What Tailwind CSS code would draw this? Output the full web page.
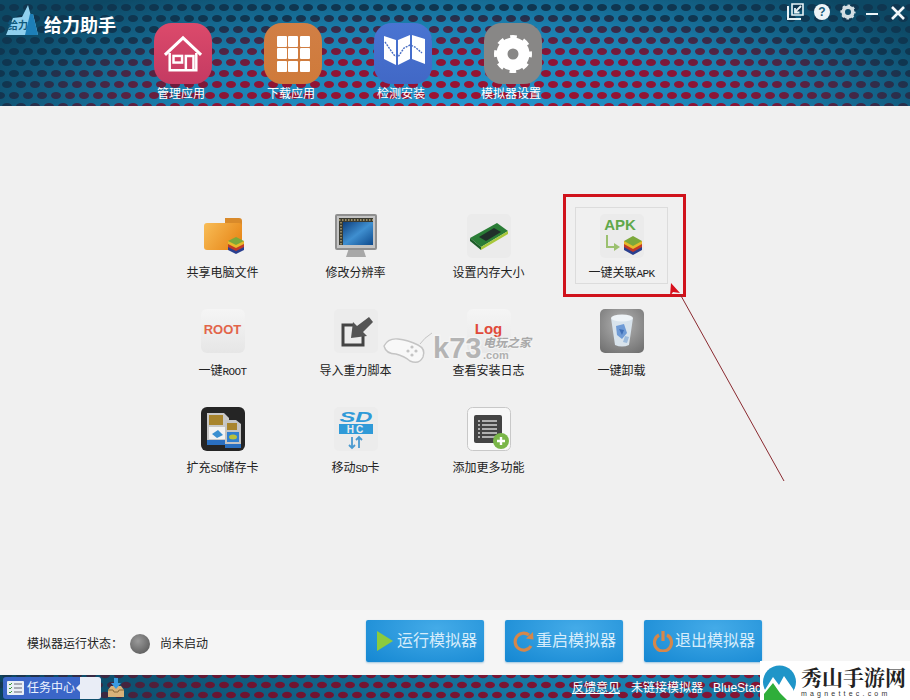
<!DOCTYPE html>
<html lang="zh-CN">

<head>
    <meta charset="UTF-8">
    <title>给力助手</title>
    <script src="https://cdn.jsdelivr.net/npm/@tailwindcss/browser@4"></script>
</head>

<body class="bg-[#f0f0f0]">
    <div class="relative w-[910px] h-[700px] overflow-hidden flex flex-col font-['Liberation_Sans','Noto_Sans_CJK_SC',sans-serif] text-[12px] text-[#222]">

        <!-- Header -->
        <header class="relative h-[106px] flex shrink-0 bg-[#0f5a7c]">
            <svg class="absolute inset-0" width="910" height="106">
                <defs>
                    <pattern id="holes" width="14" height="22" patternUnits="userSpaceOnUse">
                        <ellipse cx="7" cy="18.5" rx="5" ry="3.4" fill="#fff" />
                        <ellipse cx="0" cy="7.5" rx="5" ry="3.4" fill="#fff" />
                        <ellipse cx="14" cy="7.5" rx="5" ry="3.4" fill="#fff" />
                    </pattern>
                    <mask id="holesMask"><rect width="910" height="106" fill="url(#holes)" /></mask>
                    <radialGradient id="plate" gradientUnits="userSpaceOnUse" cx="470" cy="106" r="520" gradientTransform="translate(0 76) scale(1 0.28)">
                        <stop offset="0" stop-color="#2596cf" />
                        <stop offset="0.55" stop-color="#1b80b0" />
                        <stop offset="1" stop-color="#0d4864" />
                    </radialGradient>
                    <radialGradient id="dots" gradientUnits="userSpaceOnUse" cx="470" cy="106" r="480" gradientTransform="translate(0 84) scale(1 0.2)">
                        <stop offset="0" stop-color="#a01230" />
                        <stop offset="0.55" stop-color="#8a1536" />
                        <stop offset="0.78" stop-color="#4a2645" />
                        <stop offset="1" stop-color="#0f3650" />
                    </radialGradient>
                </defs>
                <rect width="910" height="106" fill="url(#plate)" />
                <rect width="910" height="106" fill="url(#dots)" mask="url(#holesMask)" />
            </svg>

            <!-- Logo -->
            <div class="relative w-[128px] shrink-0 flex items-start pt-[4px] pl-[5px]">
                <div class="relative w-[34px] h-[32px]">
                    <svg width="34" height="32" viewBox="0 0 34 32" class="absolute inset-0">
                        <path d="M1 31 L8 14 L17 13 L23 1 L26 12 L28 10 L33 31 Z" fill="#8fd0ee" />
                        <path d="M20 31 L25 10 L28 10 L33 31 Z" fill="#1d7fb8" />
                    </svg>
                    <span class="absolute left-[3px] top-[15px] text-[10px] leading-[14px] font-bold text-[#0f5a7c]">给力</span>
                </div>
                <span class="relative ml-[5px] mt-[11px] text-[18px] leading-[22px] font-bold text-white">给力助手</span>
            </div>

            <!-- Nav -->
            <nav class="relative flex pt-[23px]">
                <div class="w-[110px] flex flex-col items-center">
                    <div class="w-[58px] h-[61px] rounded-[18px] bg-gradient-to-b from-[#dc4a6b] to-[#c43a62] flex items-center justify-center">
                        <svg width="40" height="38" viewBox="0 0 42 40" fill="none" stroke="#fff" stroke-width="2.6">
                            <path d="M2 21 L21 3 L40 21" stroke-width="3.2" />
                            <path d="M7 19 V37 H35 V19" />
                            <rect x="11" y="22" width="9" height="7" />
                            <path d="M24 37 V22 H32 V37" />
                        </svg>
                    </div>
                    <span class="mt-[2px] -ml-[4px] leading-[16px] text-white">管理应用</span>
                </div>
                <div class="w-[110px] flex flex-col items-center">
                    <div class="w-[58px] h-[61px] rounded-[18px] bg-gradient-to-b from-[#d17f45] to-[#cf7a3a] grid grid-cols-[10px_10px_10px] grid-rows-[11px_11px_11px] gap-[1.5px] content-center justify-center">
                        <i class="bg-white rounded-[1px]"></i><i class="bg-white rounded-[1px]"></i><i class="bg-white rounded-[1px]"></i>
                        <i class="bg-white rounded-[1px]"></i><i class="bg-white rounded-[1px]"></i><i class="bg-white rounded-[1px]"></i>
                        <i class="bg-white rounded-[1px]"></i><i class="bg-white rounded-[1px]"></i><i class="bg-white rounded-[1px]"></i>
                    </div>
                    <span class="mt-[2px] -ml-[4px] leading-[16px] text-white">下载应用</span>
                </div>
                <div class="w-[110px] flex flex-col items-center">
                    <div class="w-[58px] h-[61px] rounded-[18px] bg-gradient-to-b from-[#4a74d2] to-[#4168c6]">
                        <svg width="58" height="61" viewBox="2 1 58 61">
                            <path d="M12 14 L24 18 V43 L12 37 Z M26 18 L38 13 V37 L26 43 Z M40 13 L53 17 V42 L40 37 Z" fill="#fff" />
                            <path d="M13 20 L22 33 L26 35 L32 26 L38 23 L43 25 L50 31" fill="none" stroke="#4a6fc4" stroke-width="1.4" stroke-dasharray="2 1" />
                        </svg>
                    </div>
                    <span class="mt-[2px] -ml-[4px] leading-[16px] text-white">检测安装</span>
                </div>
                <div class="w-[110px] flex flex-col items-center">
                    <div class="w-[58px] h-[61px] rounded-[18px] bg-[#888786] flex items-center justify-center">
                        <svg width="40" height="40" viewBox="0 0 40 40" fill="none" stroke="#fff">
                            <circle cx="20" cy="20" r="11" stroke-width="11" />
                            <circle cx="20" cy="20" r="15.5" stroke-width="7" stroke-dasharray="6 6.17" stroke-dashoffset="3" />
                        </svg>
                    </div>
                    <span class="mt-[2px] -ml-[4px] leading-[16px] text-white whitespace-nowrap">模拟器设置</span>
                </div>
            </nav>

            <!-- Window controls -->
            <div class="relative ml-auto flex items-start pt-[3px] pr-[5px] gap-[10px]">
                <svg width="17" height="17" viewBox="0 0 17 17" fill="none" stroke="#e8f2f6" stroke-width="2">
                    <path d="M1 3 V16 H14" />
                    <path d="M5 1 H16 V12 H5 Z" stroke-width="1.6" />
                    <path d="M14 3 L8 9 M8 5 V9.5 H12.5" stroke-width="1.8" />
                </svg>
                <span class="w-[16px] h-[16px] mt-[1px] rounded-full bg-[#eef4f7] text-[#1a5a78] text-[12px] leading-[16px] font-bold text-center">?</span>
                <svg class="mt-[1px]" width="16" height="16" viewBox="0 0 40 40" fill="none" stroke="#d4dee2">
                    <circle cx="20" cy="20" r="12" stroke-width="9" />
                    <circle cx="20" cy="20" r="15.5" stroke-width="7" stroke-dasharray="6 6.17" stroke-dashoffset="3" />
                </svg>
                <span class="w-[12px] h-[2px] mt-[10px] bg-[#eef4f7]"></span>
                <svg class="ml-[3px] mt-[3px]" width="14" height="14" viewBox="0 0 14 14" stroke="#f2f7f9" stroke-width="2.6">
                    <path d="M1 1 L13 13 M13 1 L1 13" />
                </svg>
            </div>
        </header>

        <!-- Tools -->
        <main class="h-[504px] shrink-0 bg-[#f0f0f0] pt-[103px] pl-[156px]">
            <div class="grid grid-cols-[133px_133px_133px_133px] auto-rows-[97px]">
                <div class="flex flex-col items-center pt-[5px]">
                    <svg width="44" height="44" viewBox="0 0 44 44">
                        <defs>
                            <linearGradient id="folder" x1="0" y1="0" x2="1" y2="0.5">
                                <stop offset="0" stop-color="#f8bd57" />
                                <stop offset="1" stop-color="#e88a1c" />
                            </linearGradient>
                        </defs>
                        <path d="M24 4 H38 Q41 4 41 7 V12 H24 Z" fill="#d98a2a" />
                        <path d="M3 12 Q3 9 6 9 H38 Q41 9 41 12 V33 Q41 36 38 36 H6 Q3 36 3 33 Z" fill="url(#folder)" />
                        <path d="M27 36 L35 40 L43 36 V33 H27 Z" fill="#2a3f8f" />
                        <path d="M27 33 L35 37 L43 33 V30 H27 Z" fill="#c03a28" />
                        <path d="M27 30 L35 34 L43 30 V27 H27 Z" fill="#e8b92a" />
                        <path d="M27 27 L35 23 L43 27 L35 31 Z" fill="#7ca83a" />
                    </svg>
                    <span class="mt-[7px] leading-[16px]">共享电脑文件</span>
                </div>
                <div class="flex flex-col items-center pt-[5px]">
                    <svg width="44" height="44" viewBox="0 0 44 44">
                        <defs>
                            <linearGradient id="screen" x1="0" y1="0" x2="1" y2="1">
                                <stop offset="0" stop-color="#0f3f7c" />
                                <stop offset="0.5" stop-color="#3f8fd0" />
                                <stop offset="1" stop-color="#0e4a8c" />
                            </linearGradient>
                        </defs>
                        <path d="M15 34 H29 L32 43 H12 Z" fill="#a8a8a8" />
                        <rect x="1" y="0" width="42" height="36" rx="2" fill="#8f8f8f" />
                        <rect x="3" y="2" width="38" height="32" fill="#c4c4c4" />
                        <rect x="5" y="4" width="34" height="27" fill="#3a3a30" />
                        <rect x="9" y="8" width="30" height="23" fill="url(#screen)" />
                        <path d="M5 6 H39 M7 8 V31" stroke="#b9a878" stroke-width="1.4" stroke-dasharray="1.5 1.5" />
                    </svg>
                    <span class="mt-[7px] leading-[16px]">修改分辨率</span>
                </div>
                <div class="flex flex-col items-center pt-[5px]">
                    <svg width="44" height="44" viewBox="0 0 44 44">
                        <rect width="44" height="44" rx="5" fill="#ebebeb" />
                        <path d="M3 24 L30 9 L41 17 L14 33 Z" fill="#2a7d36" />
                        <path d="M3 24 L14 33 V36 L3 27 Z" fill="#1d5c28" />
                        <path d="M14 33 L41 17 V20 L14 36 Z" fill="#a8c83a" />
                        <path d="M12 23 L27 14 L34 18 L19 27 Z" fill="#20302a" />
                    </svg>
                    <span class="mt-[7px] leading-[16px]">设置内存大小</span>
                </div>
                <div class="relative flex flex-col items-center pt-[5px]">
                    <div class="absolute left-[20px] -top-[2px] w-[93px] h-[77px] border border-[#dcdcdc]"></div>
                    <svg class="relative" width="44" height="44" viewBox="0 0 44 44">
                        <rect width="44" height="44" rx="5" fill="#ebebeb" />
                        <text x="20" y="16" text-anchor="middle" font-family="Liberation Sans" font-weight="700" font-size="15" fill="#5fa84a">APK</text>
                        <path d="M7 21 V33 H15" fill="none" stroke="#9bc06f" stroke-width="2" />
                        <path d="M14 29 L20 33 L14 37 Z" fill="#9bc06f" />
                        <path d="M24 36 L33 41 L42 36 V33 H24 Z" fill="#2a3f8f" />
                        <path d="M24 33 L33 38 L42 33 V30 H24 Z" fill="#c03a28" />
                        <path d="M24 30 L33 35 L42 30 V27 H24 Z" fill="#e8b92a" />
                        <path d="M24 27 L33 22 L42 27 L33 32 Z" fill="#7ca83a" />
                    </svg>
                    <span class="relative mt-[7px] leading-[16px]">一键关联<span class="font-['Liberation_Mono'] text-[11px] tracking-[-0.6px]">APK</span></span>
                </div>

                <div class="flex flex-col items-center pt-[3px]">
                    <div class="w-[44px] h-[44px] rounded-[6px] bg-gradient-to-b from-[#f5f5f5] to-[#e6e6e6] flex justify-center pt-[13px] text-[#e2654a] text-[13px] leading-[16px] font-bold">ROOT</div>
                    <span class="mt-[10px] leading-[16px]">一键<span class="font-['Liberation_Mono'] text-[11px] tracking-[-0.6px]">ROOT</span></span>
                </div>
                <div class="flex flex-col items-center pt-[3px]">
                    <svg width="44" height="44" viewBox="0 0 44 44">
                        <rect width="44" height="44" rx="5" fill="#ececec" />
                        <path d="M20 16 H9 V36 H29 V27" fill="none" stroke="#444" stroke-width="3" />
                        <path d="M35 8 L39 13 L29 23 L33 27 L17 29 L19 13 L23 17 Z" fill="#555" />
                    </svg>
                    <span class="mt-[10px] leading-[16px]">导入重力脚本</span>
                </div>
                <div class="flex flex-col items-center pt-[3px]">
                    <div class="w-[44px] h-[44px] rounded-[6px] bg-gradient-to-b from-[#f5f5f5] to-[#e8e8e8] flex justify-center pt-[12px] text-[#e04a3a] text-[15px] leading-[16px] font-bold">Log</div>
                    <span class="mt-[10px] leading-[16px]">查看安装日志</span>
                </div>
                <div class="flex flex-col items-center pt-[3px]">
                    <svg width="44" height="44" viewBox="0 0 44 44">
                        <defs>
                            <radialGradient id="binBg" cx="0.5" cy="0.35" r="0.75">
                                <stop offset="0" stop-color="#b4b4b4" />
                                <stop offset="1" stop-color="#727272" />
                            </radialGradient>
                        </defs>
                        <rect width="44" height="44" rx="5" fill="url(#binBg)" />
                        <path d="M11 9 L15 36 Q22 39 29 36 L33 9 Q22 13 11 9 Z" fill="#d8e3ec" />
                        <ellipse cx="22" cy="9" rx="11" ry="3.5" fill="#eef3f7" />
                        <path d="M16 17 L24 15 L27 24 L22 30 L17 26 Z" fill="#6f9bd6" />
                        <path d="M19 20 L24 21 L22 26 Z" fill="#3f6fb8" />
                        <path d="M25 27 L29 28 L27 34 L23 33 Z" fill="#9dbbdc" />
                    </svg>
                    <span class="mt-[10px] leading-[16px]">一键卸载</span>
                </div>

                <div class="flex flex-col items-center pt-[4px]">
                    <svg width="44" height="44" viewBox="0 0 44 44">
                        <rect width="44" height="44" rx="6" fill="#252525" />
                        <path d="M6 6 H23 L28 11 V38 H6 Z" fill="#c8c8c8" />
                        <rect x="8" y="8" width="14" height="10" fill="#a8842c" />
                        <rect x="8" y="20" width="18" height="12" fill="#f2f2f2" />
                        <path d="M11 27 L17 23 L22 28 L16 31 Z" fill="#3a8fd0" />
                        <rect x="6" y="33" width="22" height="5" fill="#2a6fc0" />
                        <path d="M24 13 H35 L40 17 V41 H24 Z" fill="#c4c4c4" />
                        <rect x="26" y="16" width="10" height="7" fill="#a8842c" />
                        <rect x="26" y="25" width="12" height="10" fill="#2f7fd0" />
                        <ellipse cx="32" cy="30" rx="4" ry="2.5" fill="#b8c03a" />
                        <rect x="24" y="37" width="16" height="4" fill="#2a6fc0" />
                    </svg>
                    <span class="mt-[9px] leading-[16px]">扩充<span class="font-['Liberation_Mono'] text-[11px] tracking-[-0.6px]">SD</span>储存卡</span>
                </div>
                <div class="flex flex-col items-center pt-[4px]">
                    <svg width="44" height="44" viewBox="0 0 44 44">
                        <rect width="44" height="44" rx="5" fill="#ececec" />
                        <text x="22" y="15" text-anchor="middle" font-family="Liberation Sans" font-weight="700" font-style="italic" font-size="15" textLength="33" lengthAdjust="spacingAndGlyphs" fill="#2f9ad8">SD</text>
                        <rect x="5" y="17" width="34" height="10" fill="#2f9ad8" />
                        <text x="22" y="25.5" text-anchor="middle" font-family="Liberation Sans" font-weight="700" font-size="10" letter-spacing="2" fill="#ececec">HC</text>
                        <path d="M18 30 V41 M15 38 L18 41 L21 38 M25 41 V30 M22 33 L25 30 L28 33" fill="none" stroke="#4a9ad0" stroke-width="1.8" />
                    </svg>
                    <span class="mt-[9px] leading-[16px]">移动<span class="font-['Liberation_Mono'] text-[11px] tracking-[-0.6px]">SD</span>卡</span>
                </div>
                <div class="flex flex-col items-center pt-[4px]">
                    <svg width="44" height="44" viewBox="0 0 44 44">
                        <rect x="0.5" y="0.5" width="43" height="43" rx="5" fill="#f8f8f8" stroke="#c8c8c8" />
                        <rect x="7" y="8" width="28" height="28" rx="2" fill="#444" />
                        <path d="M15 14 H30 M15 18 H30 M15 22 H30 M15 26 H30 M15 30 H30 M11 14 H13 M11 18 H13 M11 22 H13 M11 26 H13 M11 30 H13" stroke="#d4d4d4" stroke-width="1.6" />
                        <circle cx="34" cy="34" r="8" fill="#7ab648" />
                        <path d="M34 30 V38 M30 34 H38" stroke="#fff" stroke-width="2.4" />
                    </svg>
                    <span class="mt-[9px] leading-[16px]">添加更多功能</span>
                </div>
            </div>
        </main>

        <!-- Status bar -->
        <section class="h-[65px] shrink-0 bg-[#f5f5f5] flex items-center pl-[27px] pb-[3px]">
            <span class="mt-[6px] w-[96px] whitespace-nowrap">模拟器运行状态：</span>
            <span class="mt-[6px] ml-[7px] w-[20px] h-[20px] rounded-full bg-[radial-gradient(circle_at_40%_35%,#9a9a9a,#4f4f4f)]"></span>
            <span class="mt-[6px] ml-[10px] w-[206px]">尚未启动</span>

            <button class="w-[118px] h-[42px] rounded-[2px] shadow-[0_1px_2px_#9cc4de] bg-[radial-gradient(ellipse_at_60%_20%,#44abe8,#1487d2)] text-[#d6ecfb] text-[16px] flex items-center pl-[11px] gap-[4px]">
                <svg width="16" height="20" viewBox="0 0 16 20"><path d="M0 0 L16 10 L0 20 Z" fill="#8ccb3e" /></svg>
                运行模拟器
            </button>
            <button class="ml-[21px] w-[118px] h-[42px] rounded-[2px] shadow-[0_1px_2px_#9cc4de] bg-[radial-gradient(ellipse_at_60%_20%,#44abe8,#1487d2)] text-[#d6ecfb] text-[16px] flex items-center pl-[8px] gap-[2px]">
                <svg width="21" height="21" viewBox="0 0 21 21" fill="none" stroke="#d5874a" stroke-width="3.2">
                    <path d="M18 15 A8.5 8.5 0 1 1 16 4" />
                    <path d="M13 7.5 L20.5 8.5 L20 1 Z" fill="#d5874a" stroke="none" />
                </svg>
                重启模拟器
            </button>
            <button class="ml-[21px] w-[118px] h-[42px] rounded-[2px] shadow-[0_1px_2px_#9cc4de] bg-[radial-gradient(ellipse_at_60%_20%,#44abe8,#1487d2)] text-[#d6ecfb] text-[16px] flex items-center pl-[9px] gap-[2px]">
                <svg width="20" height="22" viewBox="0 0 20 22" fill="none" stroke="#d5874a" stroke-width="3.2">
                    <path d="M6 5 A8.5 8.5 0 1 0 14 5" />
                    <path d="M10 1 V11" />
                </svg>
                退出模拟器
            </button>
        </section>

        <!-- Footer -->
        <footer class="relative h-[25px] shrink-0 flex items-center bg-[#0f5272] text-white">
            <svg class="absolute inset-0" width="910" height="25">
                <defs>
                    <pattern id="holesFoot" width="14" height="20" patternUnits="userSpaceOnUse">
                        <ellipse cx="7" cy="0" rx="5" ry="3.2" fill="#fff" />
                        <ellipse cx="7" cy="20" rx="5" ry="3.2" fill="#fff" />
                        <ellipse cx="0" cy="10" rx="5" ry="3.2" fill="#fff" />
                        <ellipse cx="14" cy="10" rx="5" ry="3.2" fill="#fff" />
                    </pattern>
                    <mask id="footMask"><rect width="910" height="25" fill="url(#holesFoot)" /></mask>
                    <linearGradient id="footPlate" x1="0" x2="1" y1="0" y2="0">
                        <stop offset="0" stop-color="#0c4560" />
                        <stop offset="0.7" stop-color="#1a82b2" />
                        <stop offset="1" stop-color="#125d80" />
                    </linearGradient>
                    <linearGradient id="footDots" x1="0" x2="1" y1="0" y2="0">
                        <stop offset="0" stop-color="#133850" />
                        <stop offset="0.25" stop-color="#6e1430" />
                        <stop offset="1" stop-color="#8a1536" />
                    </linearGradient>
                </defs>
                <rect width="910" height="25" fill="url(#footPlate)" />
                <rect width="910" height="25" fill="url(#footDots)" mask="url(#footMask)" />
            </svg>

            <div class="relative ml-[3px] w-[98px] h-[22px] rounded-[3px] bg-[#3b66c8] flex items-center overflow-hidden">
                <svg class="ml-[4px]" width="17" height="14" viewBox="0 0 17 14">
                    <rect width="17" height="14" rx="1" fill="#e8eef6" />
                    <path d="M7 3 H15 M7 7 H15 M7 11 H15" stroke="#667" stroke-width="1" />
                    <path d="M2 3 L3 4 L5 2 M2 7 L3 8 L5 6 M2 11 L3 12 L5 10" stroke="#3a9a3a" fill="none" stroke-width="1" />
                </svg>
                <span class="ml-[3px] text-[12px] leading-[16px] text-[#eef3ff] whitespace-nowrap">任务中心</span>
                <div class="absolute right-0 top-0 h-full w-[21px] bg-[#e9edf6]"></div>
                <div class="absolute right-[21px] top-[7px] w-0 h-0 border-y-[4px] border-y-transparent border-r-[4px] border-r-[#e9edf6]"></div>
            </div>
            <svg class="relative ml-[7px]" width="16" height="19" viewBox="0 0 16 19">
                <path d="M0 12 L3 8 H13 L16 12 V19 H0 Z" fill="#d9b27a" />
                <path d="M0 12 H5 L6 14 H10 L11 12 H16" fill="none" stroke="#8a6a3a" stroke-width="1" />
                <path d="M6 0 H10 V5 H13 L8 11 L3 5 H6 Z" fill="#3a9ae0" />
            </svg>
            <a class="relative ml-[448px] underline whitespace-nowrap">反馈意见</a>
            <span class="relative ml-[11px] whitespace-nowrap">未链接模拟器</span>
            <span class="relative ml-[10px] whitespace-nowrap">BlueStacks</span>
        </footer>

        <!-- Red annotation frame -->
        <div class="absolute left-[563px] top-[194px] w-[123px] h-[103px] border-[3px] border-[#d0121b]"></div>
        <svg class="absolute left-[660px] top-[270px]" width="140" height="220" viewBox="0 0 140 220">
            <path d="M124 211 L20 24" stroke="#8a2a30" stroke-width="1" fill="none" />
            <path d="M11 13 L20 23 L13 22 L10 26 Z" fill="#d8101c" />
        </svg>

        <!-- k73 watermark -->
        <div class="absolute left-[382px] top-[330px] w-[155px] h-[38px]">
            <svg class="absolute left-0 top-0" width="52" height="36" viewBox="0 0 52 36">
                <path d="M2 16 Q6 8 16 9 Q26 10 36 15 Q44 19 41 27 Q37 35 28 31 Q22 26 14 24 Q4 24 2 16 Z" fill="#f8f8f8" stroke="#c4c4c4" stroke-width="1.4" />
                <path d="M38 14 Q42 8 50 3" fill="none" stroke="#c4c4c4" stroke-width="1" />
                <circle cx="30" cy="17" r="1.6" fill="#c4c4c4" /><circle cx="34" cy="21" r="1.6" fill="#c4c4c4" /><circle cx="26" cy="21" r="1.6" fill="#c4c4c4" /><circle cx="30" cy="25" r="1.6" fill="#c4c4c4" />
            </svg>
            <span class="absolute left-[51px] top-[3px] text-[29px] leading-[30px] font-bold text-[#b4b4b4] [-webkit-text-stroke:3px_#f4f4f4] [paint-order:stroke_fill]">k73</span>
            <span class="absolute left-[101px] top-[7px] text-[12px] leading-[12px] font-bold italic text-[#a8a8a8] whitespace-nowrap [-webkit-text-stroke:2px_#f4f4f4] [paint-order:stroke_fill]">电玩之家</span>
            <span class="absolute left-[101px] top-[20px] text-[11px] leading-[10px] font-bold text-[#b0b0b0] [-webkit-text-stroke:2px_#f4f4f4] [paint-order:stroke_fill]">.com</span>
        </div>

        <!-- Corner watermark -->
        <div class="absolute left-[760px] top-[661px] w-[150px] h-[39px] bg-white flex pt-[4px] pl-[3px]">
            <svg width="33" height="35" viewBox="0 0 33 35">
                <circle cx="16.5" cy="17" r="16.5" fill="#1f95c8" />
                <path d="M0 28 L10 12 L16 20 L21 11 L30 24 L33 35 H0 Z" fill="#fff" />
                <path d="M1 35 V29 L10 18 L17 28 L24 35 Z" fill="#2fae3a" />
            </svg>
            <div class="ml-[5px] flex flex-col">
                <span class="text-[21px] leading-[23px] font-bold text-[#222] font-['Noto_Serif_CJK_SC','Noto_Sans_CJK_SC',serif] whitespace-nowrap">秀山手游网</span>
                <span class="mt-[2px] text-[7px] leading-[8px] tracking-[3.2px] text-[#333] whitespace-nowrap">magnettec.com</span>
            </div>
        </div>
    </div>
</body>

</html>
